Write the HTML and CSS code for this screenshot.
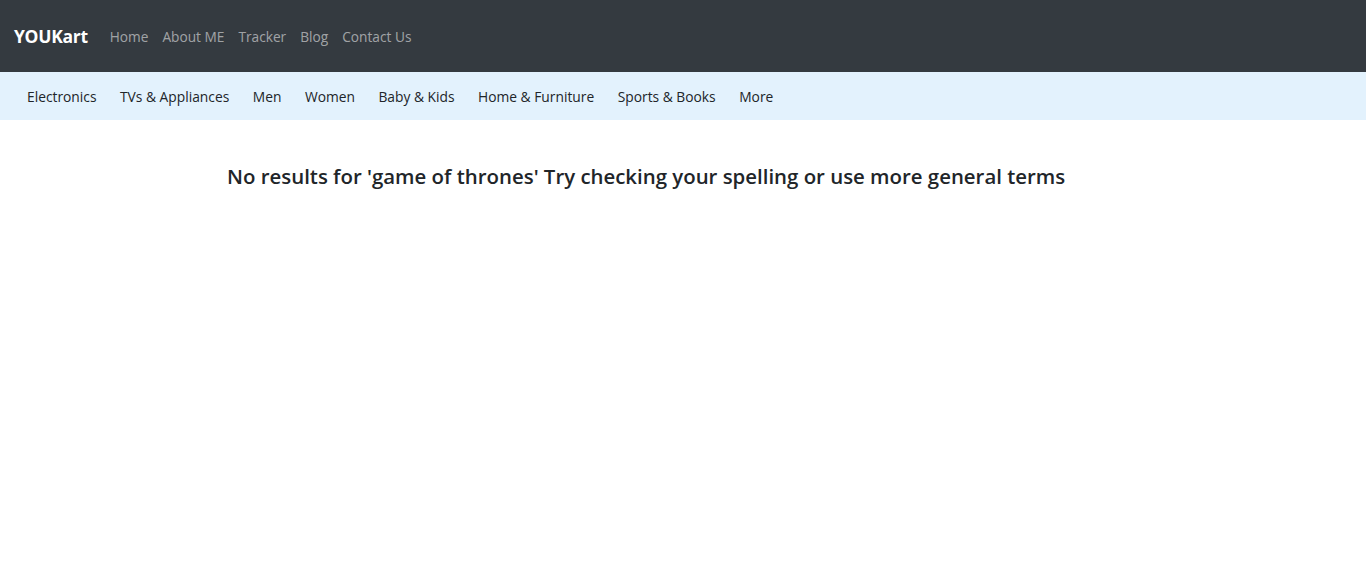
FILE: index.html
```html
<!DOCTYPE html>
<html lang="en">
<head>
<meta charset="utf-8">
<title>YOUKart</title>
<link rel="stylesheet" href="styles.css">
</head>
<body>
<nav class="topbar">
  <a class="brand" href="#">YOUKart</a>
  <ul class="main-links">
    <li><a href="#">Home</a></li>
    <li><a href="#">About ME</a></li>
    <li><a href="#">Tracker</a></li>
    <li><a href="#">Blog</a></li>
    <li><a href="#">Contact Us</a></li>
  </ul>
</nav>
<nav class="catbar">
  <a href="#">Electronics</a>
  <a href="#">TVs &amp; Appliances</a>
  <a href="#">Men</a>
  <a href="#">Women</a>
  <a href="#">Baby &amp; Kids</a>
  <a href="#">Home &amp; Furniture</a>
  <a href="#">Sports &amp; Books</a>
  <a href="#">More</a>
</nav>
<main class="content">
  <h4 class="noresult">No results for 'game of thrones' Try checking your spelling or use more general terms</h4>
</main>
</body>
</html>
```
FILE: styles.css
```css
* { box-sizing: border-box; }
html, body { margin: 0; padding: 0; background: #fff; }
body {
  font-family: "Open Sans", "Noto Sans", "Liberation Sans", sans-serif;
  color: #212529;
}
a { text-decoration: none; }
.topbar {
  height: 72px;
  background: #343a40;
  display: flex;
  align-items: center;
  padding: 0 14px;
}
.brand {
  color: #fff;
  font-size: 17.5px;
  font-weight: 700;
  letter-spacing: -0.3px;
  margin-right: 15px;
}
.main-links {
  list-style: none;
  margin: 0;
  padding: 0;
  display: flex;
}
.main-links a {
  display: block;
  padding: 0 7px;
  color: rgba(255,255,255,0.55);
  font-size: 13.7px;
}
.catbar {
  height: 48px;
  background: #e3f2fd;
  display: flex;
  align-items: center;
  padding: 0 27px;
  gap: 23.5px;
}
.catbar a {
  color: #212529;
  font-size: 13.8px;
}
.content {
  padding-left: 227px;
}
.noresult {
  margin: 41px 0 0;
  font-size: 20.4px;
  font-weight: 600;
  line-height: 1.5;
}
```
